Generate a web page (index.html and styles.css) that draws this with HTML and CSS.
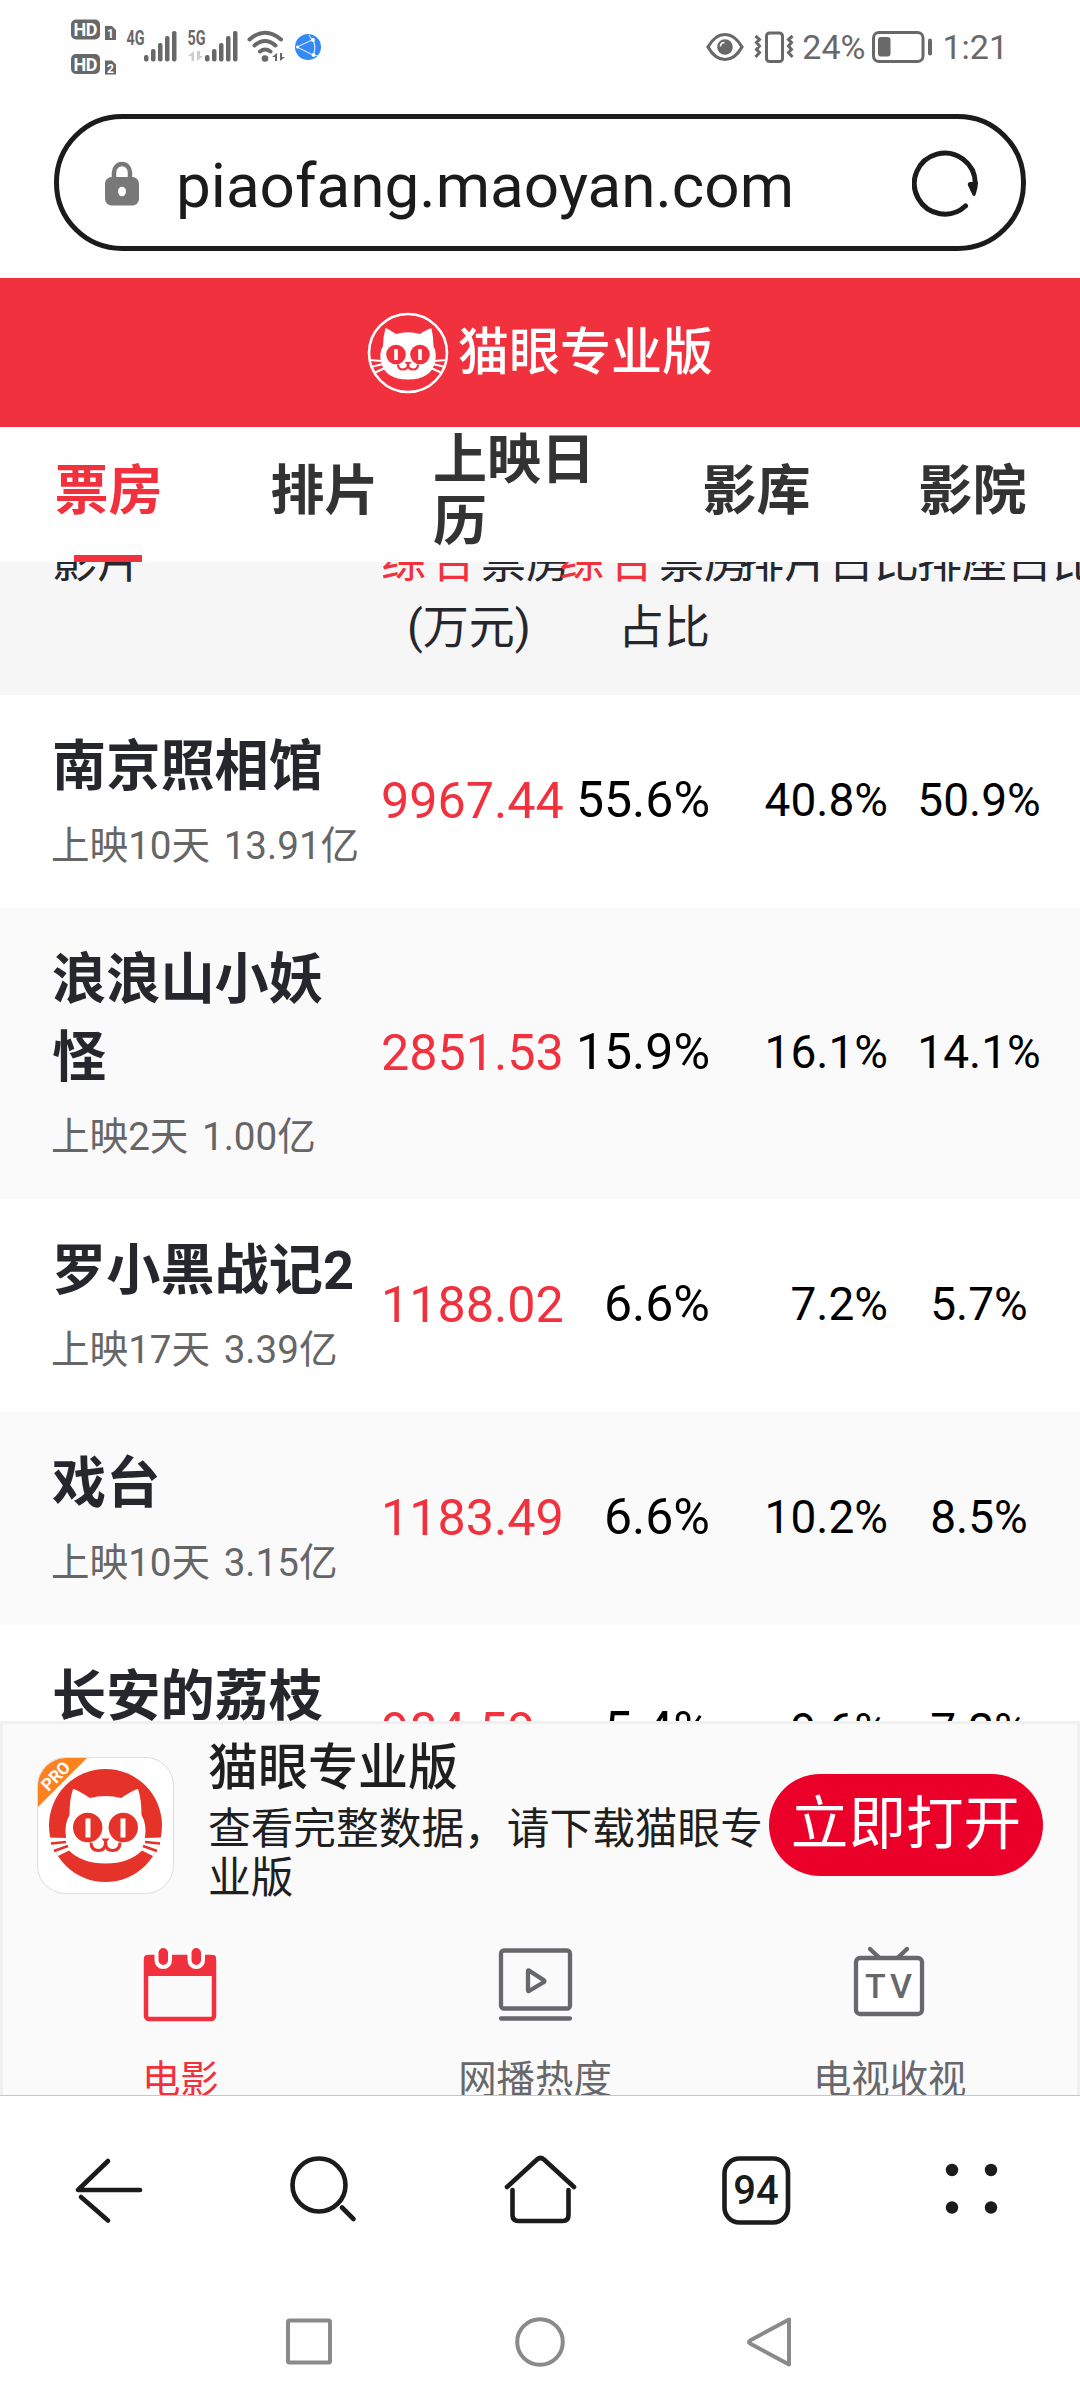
FILE: index.html
```html
<!DOCTYPE html>
<html lang="zh-CN">
<head>
  <meta charset="UTF-8">
  <meta name="viewport" content="width=device-width, initial-scale=1.0">
  <title>猫眼专业版</title>
  <link rel="stylesheet" href="styles.css">
</head>
<body>
  <div class="status-bar">
    <svg class="status-left" width="270" height="80" viewBox="60 0 270 80">
      <g fill="#686868">
        <rect x="71" y="19.500" width="29" height="20" rx="5"/>
        <rect x="71" y="54" width="29" height="20" rx="5"/>
        <path d="M105 26h7l4 4v10h-11zM105 60.500h7l4 4v10h-11z"/>
        <rect x="144" y="55" width="4.500" height="6.500" rx="2"/>
        <rect x="151" y="49" width="4.500" height="12.500" rx="2"/>
        <rect x="158" y="43" width="4.500" height="18.500" rx="2"/>
        <rect x="165" y="36" width="4.500" height="25.500" rx="2"/>
        <rect x="172" y="31" width="4.500" height="30.500" rx="2"/>
        <rect x="205" y="55" width="4.500" height="6.500" rx="2"/>
        <rect x="212" y="49" width="4.500" height="12.500" rx="2"/>
        <rect x="219" y="43" width="4.500" height="18.500" rx="2"/>
        <rect x="226" y="36" width="4.500" height="25.500" rx="2"/>
        <rect x="233" y="31" width="4.500" height="30.500" rx="2"/>
        <circle cx="265" cy="58.500" r="3.300"/>
        <path d="M272 57l5-4v8h-2v-4zM280 53v8l5-4h-3v-4z"/>
      </g>
      <path d="M188 56l6-5v10h-2.500v-5zM197 51v10l6-5h-3v-5z" fill="#ccc"/>
      <g fill="none" stroke="#686868" stroke-width="4" stroke-linecap="round">
        <path d="M249.500 39.500Q265 26 281 39.500M254.500 45.500Q265 36.500 275.500 45.500M260 51.500Q265 47.500 270.500 51.500"/>
      </g>
      <g class="status-tag">
        <text x="73.500" y="36" font-size="18" textLength="24" fill="#fff">HD</text>
        <text x="73.500" y="70.500" font-size="18" textLength="24" fill="#fff">HD</text>
        <text x="107" y="38" font-size="12" fill="#fff">1</text>
        <text x="107" y="72.500" font-size="12" fill="#fff">2</text>
        <text x="126.500" y="45" font-size="19.500" textLength="18" lengthAdjust="spacingAndGlyphs" fill="#686868">4G</text>
        <text x="187.500" y="45" font-size="19.500" textLength="18" lengthAdjust="spacingAndGlyphs" fill="#686868">5G</text>
      </g>
      <circle cx="308" cy="47" r="13" fill="#3489f6"/>
      <path d="M297 47L312 40M297 47L313 55M313.500 40.500q2.500 7 0 14.500M312 40l-3-5M313.500 55l5 1" fill="none" stroke="#d5e7ff" stroke-width="1.200"/>
      <g fill="#fff"><circle cx="297.500" cy="47" r="1.500"/><circle cx="313" cy="40" r="1.900"/><circle cx="313.500" cy="55" r="1.900"/></g>
    </svg>
    <div class="status-right">
      <svg class="eye" width="38" height="30" viewBox="0 0 38 30">
        <path d="M2 15Q9 2.500 19 2.500T36 15Q29 27.500 19 27.500T2 15z" fill="none" stroke="#686868" stroke-width="3.200"/>
        <circle cx="19" cy="15" r="7.800" fill="#686868"/>
        <path d="M14.500 14.500Q14.500 10.500 18.500 10.500" fill="none" stroke="#fff" stroke-width="1.600"/>
      </svg>
      <svg class="vibrate" width="40" height="32" viewBox="0 0 40 32" fill="none" stroke="#686868" stroke-width="3">
        <rect x="12.500" y="2" width="16" height="28.500" rx="3"/>
        <path d="M1.500 5l4 3.500-3 3 3 3.500-3 3.500 3 3-4 4.500M38.500 5l-4 3.500 3 3-3 3.500 3 3.500-3 3 4 4.500"/>
      </svg>
      <span class="battery-text">24%</span>
      <svg class="battery" width="62" height="32" viewBox="0 0 62 32">
        <rect x="1.500" y="1.500" width="49.500" height="29" rx="5.500" fill="none" stroke="#686868" stroke-width="3"/>
        <rect x="6" y="6" width="12.500" height="19.500" rx="3" fill="#686868"/>
        <rect x="56" y="7.500" width="4" height="17" rx="2" fill="#686868"/>
      </svg>
      <span class="clock">1:21</span>
    </div>
  </div>

  <div class="url-bar">
    <svg class="lock" width="34" height="46" viewBox="0 0 34 46">
      <path d="M9 20V12.500a8 8.500 0 0 1 16 0V20" fill="none" stroke="#787878" stroke-width="4.500"/>
      <rect y="17" width="34" height="28.500" rx="6.500" fill="#787878"/>
      <ellipse cx="17" cy="31.500" rx="4" ry="4.800" fill="#fff"/>
    </svg>
    <span class="url-text">piaofang.maoyan.com</span>
    <svg class="reload" width="68" height="68" viewBox="0 0 68 68">
      <path d="M53.500 57A30.500 30.500 0 1 1 63.300 34" fill="none" stroke="#1b1b1b" stroke-width="5" stroke-linecap="round"/>
      <path d="M56 36.500q-1-3 2-3.500h8q0 6-2.500 13-1.500 2-3 0z" fill="#1b1b1b"/>
    </svg>
  </div>

  <div class="site-header">
    <svg class="brand-cat" width="82" height="82" viewBox="0 0 82 82">
      <circle cx="41" cy="41" r="39" fill="none" stroke="#fff" stroke-width="2.600"/>
      <path d="M18.500 16Q20 16 29 22Q41 18.500 53 22Q62 16 64.500 16.500Q66.500 25 66.500 34Q70 41 68 50Q64 67.500 41 67.500T14 50Q12 41 16 34Q16 25 18.500 16z" fill="#fff"/>
      <path d="M2 48l13 1M4 55l12-3M7 61l11-5M80 48l-13 1M78 55l-12-3M75 61l-11-5" stroke="#fff" stroke-width="2.200"/>
      <g fill="#f1313e"><circle cx="29" cy="42.500" r="9.800"/><circle cx="53" cy="42.500" r="9.800"/><path d="M37.500 50h7L41 54z"/></g>
      <path d="M31 52.500q0 5 5 5 5 0 5-5.500 0 5.500 5 5.500 5 0 5-5" fill="none" stroke="#f1313e" stroke-width="2.200"/>
      <path d="M29 37v11M53 37v11" stroke="#fff" stroke-width="3.600"/>
    </svg>
    <span class="brand-name">猫眼专业版</span>
  </div>

  <div class="tabs">
    <div class="tab active">票房</div>
    <div class="tab">排片</div>
    <div class="tab two-line">上映日<br>历</div>
    <div class="tab">影库</div>
    <div class="tab">影院</div>
  </div>

  <div class="board">
    <div class="board-head">
      <div class="head-movie">影片</div>
      <div class="head-box"><em>综合</em>票房<br><span class="head-sub">(万元)</span></div>
      <div class="head-share"><em>综合</em>票房<br><span class="head-sub">占比</span></div>
      <div class="head-show">排片占比</div>
      <div class="head-seat">排座占比</div>
    </div>
    <div class="row">
      <div class="movie"><h3>南京照相馆</h3><p>上映10天 13.91亿</p></div>
      <div class="box">9967.44</div><div class="share">55.6%</div><div class="show">40.8%</div><div class="seat">50.9%</div>
    </div>
    <div class="row">
      <div class="movie"><h3>浪浪山小妖怪</h3><p>上映2天 1.00亿</p></div>
      <div class="box">2851.53</div><div class="share">15.9%</div><div class="show">16.1%</div><div class="seat">14.1%</div>
    </div>
    <div class="row">
      <div class="movie"><h3>罗小黑战记2</h3><p>上映17天 3.39亿</p></div>
      <div class="box">1188.02</div><div class="share">6.6%</div><div class="show">7.2%</div><div class="seat">5.7%</div>
    </div>
    <div class="row">
      <div class="movie"><h3>戏台</h3><p>上映10天 3.15亿</p></div>
      <div class="box">1183.49</div><div class="share">6.6%</div><div class="show">10.2%</div><div class="seat">8.5%</div>
    </div>
    <div class="row">
      <div class="movie"><h3>长安的荔枝</h3><p>上映17天 6.37亿</p></div>
      <div class="box">984.59</div><div class="share">5.4%</div><div class="show">9.6%</div><div class="seat">7.2%</div>
    </div>
  </div>

  <div class="bottom-panel">
    <div class="download">
      <svg class="app-icon" width="137" height="137" viewBox="0 0 137 137">
        <defs><clipPath id="iconClip"><rect x="1" y="1" width="135" height="135" rx="28"/></clipPath></defs>
        <rect x=".5" y=".5" width="136" height="136" rx="28" fill="#fff" stroke="#ddd"/>
        <g clip-path="url(#iconClip)">
          <path d="M0 0h51L0 51z" fill="#fc8220"/>
          <text class="pro" transform="translate(11.500 35) rotate(-46)" textLength="33" fill="#fff">PRO</text>
        </g>
        <g transform="translate(12 12)">
          <circle cx="56.500" cy="56.500" r="56.500" fill="#e6332a"/>
          <path d="M24 20Q27 20 41 29Q56.500 25 72 29Q86 20 89 20Q92.500 30 92.500 46Q98 55 96 69L114 68.500L104 87L93 81.500Q80 94.500 56.500 94.500T20 81.500L9 87L-1 68.500L17 69Q15 55 20.500 46Q20.500 30 24 20z" fill="#fff"/>
          <path d="M2 74.500l15-1.500M5 82l14-5M111 74.500l-15-1.500M108 82l-14-5" stroke="#e6332a" stroke-width="2.600"/>
          <g fill="#e6332a"><circle cx="38.700" cy="58.500" r="14.700"/><circle cx="74.300" cy="58.500" r="14.700"/><path d="M52.500 69.500h8l-4 5z"/></g>
          <path d="M42 73.500q0 8 7.500 8 7 0 7-8.500 0 8.500 7 8.500 7.500 0 7.500-8" fill="none" stroke="#e6332a" stroke-width="3"/>
          <path d="M39 49.500v19M74 49.500v19" stroke="#fff" stroke-width="5"/>
        </g>
      </svg>
      <div class="download-text">
        <div class="download-name">猫眼专业版</div>
        <div class="download-desc">查看完整数据，请下载猫眼专业版</div>
      </div>
      <div class="open-btn">立即打开</div>
    </div>
    <div class="channels">
      <div class="channel active">
        <svg width="76" height="80" viewBox="0 0 76 80">
          <rect x="4" y="13" width="68" height="62" rx="3" fill="none" stroke="#f1313e" stroke-width="4.500"/>
          <path d="M2 32V14q0-3 3-3h66q3 0 3 3v18z" fill="#f1313e"/>
          <g fill="#f1313e" stroke="#fff" stroke-width="4">
            <rect x="14.500" y="2" width="13.500" height="21" rx="6.700"/>
            <rect x="47.500" y="2" width="13.500" height="21" rx="6.700"/>
          </g>
        </svg>
        <span>电影</span>
      </div>
      <div class="channel">
        <svg width="76" height="80" viewBox="0 0 76 80" fill="none" stroke="#67686c" stroke-width="4.300" stroke-linecap="round" stroke-linejoin="round">
          <rect x="4" y="6.500" width="69" height="58" rx="3"/>
          <path d="M4 74.500h69M31 27v19.500q0 1 1 .5l15-9q1-.8 0-1.600L32 26.500q-1-.5-1 .5z"/>
        </svg>
        <span>网播热度</span>
      </div>
      <div class="channel">
        <svg width="76" height="80" viewBox="0 0 76 80" fill="none" stroke="#67686c" stroke-width="4.300" stroke-linecap="round" stroke-linejoin="round">
          <path d="M18 5l9 8.500M55 5l-9 8.500"/>
          <rect x="4" y="14" width="66" height="56" rx="4" fill="#fff"/>
          <text class="tv-text" y="54"><tspan x="13">T</tspan><tspan x="38">V</tspan></text>
        </svg>
        <span>电视收视</span>
      </div>
    </div>
  </div>

  <div class="toolbar">
    <svg viewBox="0 0 76 80"><path d="M36 11L6 40h62M9 47l27 23.500" transform="translate(1 0)"/></svg>
    <svg viewBox="0 0 76 80"><circle cx="32" cy="35" r="26.500"/><path d="M55 57.500L66.500 69"/></svg>
    <svg viewBox="0 0 76 80"><path d="M5 37L35 9.500q3.500-3 7 0L72 37M10.500 40v25q0 6 6 6h44q6 0 6-6V40"/></svg>
    <svg viewBox="0 0 76 80"><rect x="6.500" y="8.500" width="63.500" height="64" rx="15"/><text class="tab-count" x="38" y="54" text-anchor="middle">94</text></svg>
    <svg viewBox="0 0 76 80"><g fill="#1b1b1b" stroke="none"><circle cx="19" cy="20" r="6.200"/><circle cx="58" cy="20" r="6.200"/><circle cx="19" cy="57.500" r="6.200"/><circle cx="58" cy="57.500" r="6.200"/></g></svg>
  </div>

  <div class="system-nav">
    <svg viewBox="0 0 56 56"><rect x="7" y="6.500" width="42" height="42" rx="1.500"/></svg>
    <svg viewBox="0 0 56 56"><circle cx="28" cy="28" r="22.800"/></svg>
    <svg viewBox="0 0 56 56"><path d="M46 5.500v45L7 29.500q-2-1.500 0-3z"/></svg>
  </div>
</body>
</html>
```
FILE: styles.css
```css
* {
  box-sizing: border-box;
}
body {
  margin: 0;
  width: 1080px;
  height: 2400px;
  overflow: hidden;
  display: flex;
  flex-direction: column;
  background: #fefefe;
  color: #26272d;
  font-family: Roboto, "Noto Sans CJK SC", sans-serif;
}
svg {
  display: block;
  flex: none;
}

/* phone status bar */
.status-bar {
  height: 114px;
  padding: 0 72px 0 60px;
  display: flex;
  justify-content: space-between;
  align-items: flex-start;
  color: #686868;
}
.status-tag {
  font-weight: 700;
}
.status-right {
  height: 93px;
  display: flex;
  align-items: center;
  font-size: 34px;
}
.vibrate {
  margin: 0 8px 0 10px;
}
.battery {
  margin: 0 8px 0 7px;
}

/* address bar */
.url-bar {
  height: 137px;
  margin: 0 54px 27px;
  padding: 0 41px 0 46px;
  border: 5px solid #1b1b1b;
  border-radius: 68px;
  display: flex;
  align-items: center;
  color: #1b1b1b;
}
.url-text {
  margin-left: 37px;
  flex: 1;
  font-size: 62px;
  line-height: 80px;
  padding-top: 7px;
}

/* site header */
.site-header {
  height: 149px;
  background: #f1313e;
  color: #fff;
  display: flex;
  justify-content: center;
  align-items: center;
}
.brand-name {
  margin-left: 9px;
  font-size: 51px;
  font-weight: 500;
  line-height: 60px;
}
.tabs {
  height: 135px;
  display: grid;
  grid-template-columns: repeat(5, 216px);
  color: #333;
  font-size: 54px;
  font-weight: 700;
  line-height: 62px;
}
.tab {
  position: relative;
  display: flex;
  justify-content: center;
  align-items: center;
  padding: 0 0 5px 1px;
}
.tab.two-line {
  justify-content: flex-start;
}
.tab.active {
  color: #f1313e;
}
.tab.active::after {
  content: "";
  position: absolute;
  left: 74px;
  bottom: 0;
  width: 68px;
  height: 7px;
  background: #f1313e;
}

/* box office table */
.board {
  height: 1159px;
  overflow: hidden;
}
.board-head,
.row {
  display: grid;
  grid-template-columns: 328px 177px 152px 180px 180px;
  padding-left: 52px;
}
.board-head {
  height: 133px;
  background: #f6f6f7;
  font-size: 45px;
  line-height: 65px;
  white-space: nowrap;
}
.board-head > div {
  margin-top: -32px;
}
.board-head em {
  font-style: normal;
  letter-spacing: 5px;
  color: #f1313e;
}
.head-box {
  padding-left: 1px;
}
.head-sub {
  display: block;
  text-align: center;
  font-size: 46px;
}
.head-share .head-sub {
  width: 210px;
}
.head-share {
  margin-left: 2px;
}
.head-show {
  margin-left: 30px;
}
.head-seat {
  margin-left: 28px;
}
.row {
  align-items: center;
  background: #fff;
}
.row:nth-child(odd) {
  background: #fafafa;
}
.movie {
  padding: 33px 12px 34px 0;
}
.movie h3 {
  margin: 0;
  font-size: 54.200px;
  font-weight: 700;
  line-height: 78px;
}
.movie p {
  margin: 12px 0 0 -1px;
  font-size: 38.600px;
  line-height: 56px;
  word-spacing: 4px;
  color: #666;
  white-space: nowrap;
}
.box {
  padding: 0 0 3px 1px;
  color: #f1313e;
  font-size: 50.300px;
}
.share,
.show,
.seat {
  padding-bottom: 3px;
  color: #000;
  font-size: 50px;
  text-align: right;
}
.share {
  position: relative;
  left: 1px;
}
.show,
.seat {
  font-size: 46px;
}
.show {
  padding-right: 1px;
}
.seat {
  text-align: center;
}

/* download banner and channel tabs */
.bottom-panel {
  height: 374px;
  border: 3px solid #f0f0f0;
  border-bottom: 0;
  background: #fafafa;
  overflow: hidden;
}
.download {
  height: 210px;
  padding: 0 33px 0 34px;
  display: flex;
  align-items: flex-start;
}
.app-icon {
  margin-top: 33px;
}
.download-text {
  width: 558px;
  margin: 15px 3px 0 34px;
  color: #1f1f1f;
}
.download-name {
  font-size: 50px;
  font-weight: 500;
  line-height: 58px;
}
.download-desc {
  margin-top: 8px;
  font-size: 42.700px;
  line-height: 49px;
}
.open-btn {
  width: 274px;
  height: 102px;
  margin-top: 50px;
  padding-bottom: 13px;
  border-radius: 51px;
  background: #eb0029;
  color: #fff;
  font-size: 57.600px;
  display: flex;
  justify-content: center;
  align-items: center;
  flex: none;
}
.pro {
  font-size: 17px;
  font-weight: 700;
}
.channels {
  width: 1064px;
  padding-top: 10px;
  display: flex;
}
.channel {
  flex: 1;
  display: flex;
  flex-direction: column;
  align-items: center;
  gap: 28px;
  color: #67686c;
  font-size: 38.400px;
  line-height: 56px;
}
.channel.active {
  color: #f1313e;
}
.tv-text {
  font-size: 34px;
  font-weight: 500;
  fill: #67686c;
  stroke: none;
}

/* browser toolbar */
.toolbar {
  height: 186px;
  border-top: 1px solid #c6c6c6;
  padding: 54px 71px 0 71px;
  display: flex;
  justify-content: space-between;
}
.toolbar svg {
  width: 76px;
  height: 80px;
  fill: none;
  stroke: #1b1b1b;
  stroke-width: 4.600;
  stroke-linecap: round;
  stroke-linejoin: round;
}
.toolbar .tab-count {
  fill: #1b1b1b;
  stroke: none;
  font-size: 40px;
  font-weight: 500;
}
.system-nav {
  height: 119px;
  padding-top: 33px;
  display: flex;
  justify-content: center;
  gap: 175px;
}
.system-nav svg {
  width: 56px;
  height: 56px;
  fill: none;
  stroke: #8a8a8a;
  stroke-width: 4;
  stroke-linejoin: round;
}
```
